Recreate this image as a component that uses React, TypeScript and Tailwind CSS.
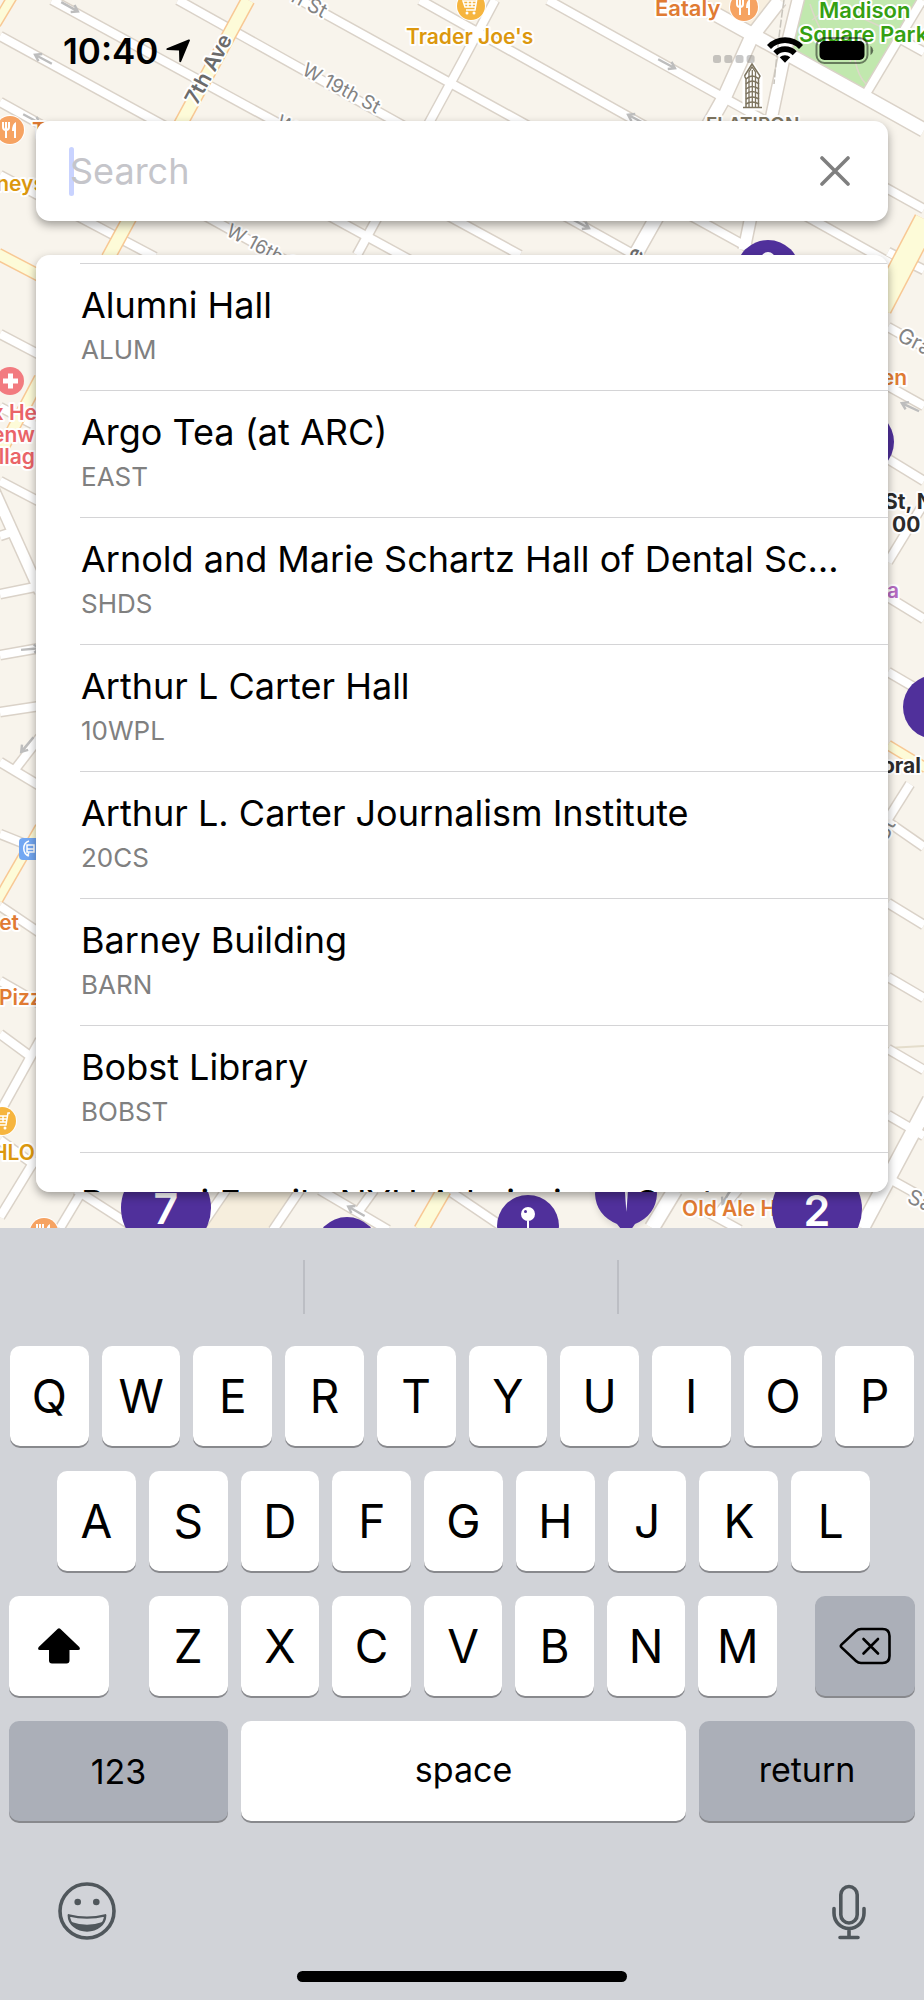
import { useState } from "react"

type TPlace = { name: string; code?: string }
type TRoad = { d: string; w?: number }

const places: TPlace[] = [
  { name: "Alumni Hall", code: "ALUM" },
  { name: "Argo Tea (at ARC)", code: "EAST" },
  { name: "Arnold and Marie Schartz Hall of Dental Sciences", code: "SHDS" },
  { name: "Arthur L Carter Hall", code: "10WPL" },
  { name: "Arthur L. Carter Journalism Institute", code: "20CS" },
  { name: "Barney Building", code: "BARN" },
  { name: "Bobst Library", code: "BOBST" },
  { name: "Bonomi Family NYU Admissions Center" },
]

export default function App() {
  const [query, setQuery] = useState("")

  return (
    <main className="relative flex h-screen flex-col overflow-hidden bg-[#f8f4ec] font-['Inter',sans-serif] text-black">
      <CityMap />
      <StatusBar />
      <form
        className="relative mx-9 flex h-[100px] flex-none items-center rounded-[14px] bg-white pr-[38px] pl-[34px] shadow-[0_4px_10px_rgba(0,0,0,0.36)]"
        onSubmit={e => e.preventDefault()}
      >
        <span className="absolute left-[33px] h-[49px] w-[5px] rounded-full bg-[#c9d3ff]" />
        <input
          aria-label="Search"
          className="relative h-full min-w-0 flex-1 bg-transparent text-[36px] outline-none placeholder:text-[#c5c5ca]"
          placeholder="Search"
          value={query}
          onChange={e => setQuery(e.target.value)}
        />
        <button type="button" aria-label="Clear" onClick={() => setQuery("")}>
          <svg className="size-[30px]" viewBox="0 0 30 30" stroke="#7f7f7f" strokeWidth="3.6" strokeLinecap="round">
            <path d="M2 2L28 28M28 2L2 28" />
          </svg>
        </button>
      </form>
      <ul className="relative mx-9 mt-[34px] mb-9 min-h-0 flex-1 overflow-y-auto rounded-[14px] bg-white pt-2 shadow-[0_4px_10px_rgba(0,0,0,0.36)] [scrollbar-width:none]">
        {places.map(p => <PlaceRow place={p} key={p.name} />)}
      </ul>
      <Keyboard />
    </main>
  )
}

function PlaceRow({ place }: { place: TPlace }) {
  return (
    <li className="ml-11 h-[127px] border-t border-[#d4d4d6] pr-12 pl-px">
      <button type="button" className={"block w-full text-left " + (place.code ? "pt-[19px]" : "pt-7")}>
        <div className="truncate text-[36px] leading-[44px]">{place.name}</div>
        {place.code && <div className="mt-[7px] text-[26px] leading-8 text-[#808080]">{place.code}</div>}
      </button>
    </li>
  )
}

function StatusBar() {
  return (
    <header className="relative flex h-[121px] flex-none items-start justify-between pt-[30px] pr-[50px] pl-[63px]">
      <div className="flex items-center gap-2">
        <span className="text-[35px] leading-[42px] font-semibold">10:40</span>
        <svg className="size-6" viewBox="0 0 24 24">
          <path d="M22.6 .6C23.7 .1 24.3 .8 23.8 1.8L15.2 22.6C14.7 23.6 13.4 23.5 13.3 22.3L13 11.4L1.4 11C.1 10.9 -.1 9.8 1 9.2Z" />
        </svg>
      </div>
      <div className="flex h-10 items-center">
        <svg className="h-10 w-[42px]" viewBox="0 0 42 40" fill="#77777766">
          <rect x="0" y="25" width="8" height="8" rx="2.500" />
          <rect x="11.300" y="25" width="8" height="8" rx="2.500" />
          <rect x="22.500" y="25" width="8" height="8" rx="2.500" />
          <rect x="33.600" y="25" width="8" height="8" rx="2.500" />
        </svg>
        <svg className="ml-3 h-[26px] w-9" viewBox="0 0 36 26">
          <path d="M0 8A25 25 0 0 1 36 8L32 12A19.500 19.500 0 0 0 4 12ZM6.300 14.200A16.500 16.500 0 0 1 29.700 14.200L25.700 18.200A11 11 0 0 0 10.300 18.200ZM12.700 20.200A8 8 0 0 1 23.300 20.200L18 25.800Z" />
        </svg>
        <svg className="ml-3 h-[27px] w-[59px]" viewBox="0 0 59 27">
          <rect x="1.500" y="1" width="51" height="25" rx="8" fill="none" stroke="#0007" strokeWidth="2" />
          <rect x="4.500" y="4" width="45" height="19" rx="5" />
          <path d="M55.500 8.800Q61 13.500 55.500 18.200Z" fill="#0008" />
        </svg>
      </div>
    </header>
  )
}

/* ---------- keyboard ---------- */

const keyBase = "flex h-[100px] items-center justify-center rounded-[10px] shadow-[0_2px_0_#88898d]"
const darkKey = "bg-[#abafb8]"

function LetterKeys({ letters, className }: { letters: string; className: string }) {
  return (
    <div className={"flex gap-[13px] " + className}>
      {letters.split("").map(l => (
        <button type="button" key={l} className={keyBase + " min-w-0 flex-1 bg-white text-[46px] leading-none"}>
          {l}
        </button>
      ))}
    </div>
  )
}

function Keyboard() {
  return (
    <section aria-label="Keyboard" className="relative flex-none bg-[#d1d3d8] pb-[18px]">
      {/* suggestion bar */}
      <div className="mx-[-8px] grid h-[118px] grid-cols-3 divide-x-2 divide-[#bcbec4] py-8">
        <div /><div /><div />
      </div>
      <div className="flex flex-col gap-[25px]">
        <LetterKeys letters="QWERTYUIOP" className="px-[10px]" />
        <LetterKeys letters="ASDFGHJKL" className="pr-[54px] pl-[57px]" />
        <div className="flex px-[9px]">
          <button type="button" aria-label="Shift" className={keyBase + " w-[100px] bg-white"}>
            <svg className="h-9 w-[42px]" viewBox="0 0 42 36">
              <path d="M19.800 .8Q21 -.2 22.200 .8L41.300 19Q43 21.800 40 22H31.500V32.500Q31.500 35.500 28.500 35.500H14Q11 35.500 11 32.500V22H2Q-1 21.800 .7 19Z" />
            </svg>
          </button>
          <LetterKeys letters="ZXCVBNM" className="mr-[38px] ml-10 flex-1" />
          <button type="button" aria-label="Delete" className={keyBase + " w-[100px] " + darkKey}>
            <svg className="h-[38px] w-[52px]" viewBox="0 0 52 38" fill="none" stroke="#000" strokeWidth="2.600" strokeLinecap="round" strokeLinejoin="round">
              <path d="M2.500 17.600L17 4Q19.200 2 22 2H43.500Q50.500 2 50.500 9V29Q50.500 36 43.500 36H22Q19.200 36 17 34L2.500 20.400Q1 19 2.500 17.600Z" />
              <path d="M24.500 12L39 26.500M39 12L24.500 26.500" />
            </svg>
          </button>
        </div>
        <div className="flex gap-[13px] px-[9px] text-[34px]">
          <button type="button" className={keyBase + " w-[219px] " + darkKey}>123</button>
          <button type="button" className={keyBase + " flex-1 bg-white pb-1"}>space</button>
          <button type="button" className={keyBase + " w-[216px] pb-1 " + darkKey}>return</button>
        </div>
      </div>
      <div className="mt-[61px] flex items-center justify-between px-[58px]">
        <button type="button" aria-label="Emoji">
          <svg className="size-[58px]" viewBox="0 0 58 58" fill="none" stroke="#50575c" strokeWidth="3.600">
            <circle cx="29" cy="29" r="27" />
            <circle cx="19.700" cy="20" r="3.300" fill="#50575c" stroke="none" />
            <circle cx="38.300" cy="20" r="3.300" fill="#50575c" stroke="none" />
            <path d="M10.800 33.300Q29 38 47.200 33.300C47.200 42 39 48.500 29 48.500S10.800 42 10.800 33.300Z" strokeWidth="2.400" strokeLinejoin="round" />
            <path d="M13.500 40Q29 45.500 44.500 40C41 46 35.500 49 29 49S17 46 13.500 40Z" fill="#50575c" stroke="none" />
          </svg>
        </button>
        <button type="button" aria-label="Dictate">
          <svg className="h-[58px] w-[34px]" viewBox="0 0 34 58" fill="none" stroke="#50575c" strokeWidth="3.600" strokeLinecap="round">
            <rect x="8.800" y="4.500" width="16.400" height="36.500" rx="8.200" />
            <path d="M2 26.500V31A15 15.500 0 0 0 32 31V26.500M17 46.500V55M8 55.500H26" />
          </svg>
        </button>
      </div>
      <div className="mx-auto mt-[31px] h-[11px] w-[330px] rounded-full bg-black" />
    </section>
  )
}

/* ---------- map ---------- */

const streets: TRoad[] = [
  // cross streets
  { d: "M0 102L285 260" },
  { d: "M0 175L155 257" },
  { d: "M0 36L410 260" },
  { d: "M52 0L520 255" },
  { d: "M178 0L640 258" },
  { d: "M300 0L760 254" },
  { d: "M420 0L899 268" },
  { d: "M548 0L924 209" },
  { d: "M690 0L755 36L865 97L924 130", w: 13 },
  { d: "M895 36L924 52" },
  // avenues
  { d: "M495 0L462 62L430 121L357 255" },
  { d: "M780 0L752 36L725 96L637 252", w: 13 },
  { d: "M799 -4L785 53L772 115L744 250", w: 11 },
  { d: "M922 0L867 92" },
  // left edge
  { d: "M0 334L40 355" },
  { d: "M0 407L40 428" },
  { d: "M0 481L40 502" },
  { d: "M-6 490L40 592", w: 10 },
  { d: "M0 536L12 532" },
  { d: "M0 594L40 586" },
  { d: "M0 655L40 648" },
  { d: "M0 712L40 706" },
  { d: "M0 762L40 786" },
  { d: "M13 772L40 737" },
  { d: "M0 834L40 850" },
  { d: "M0 906L40 933" },
  { d: "M0 981L40 1004" },
  { d: "M0 1034L30 1056" },
  { d: "M40 1040L0 1112" },
  { d: "M0 1140L36 1166" },
  { d: "M36 1158L0 1217" },
  // right edge
  { d: "M888 252L924 270" },
  { d: "M888 327L924 347" },
  { d: "M888 386L924 406" },
  { d: "M888 459L924 481" },
  { d: "M924 503L888 562" },
  { d: "M888 597L924 619" },
  { d: "M888 672L924 693" },
  { d: "M910 784L888 819" },
  { d: "M888 822L924 847" },
  { d: "M888 903L924 925" },
  { d: "M888 977L924 998" },
  { d: "M888 1049L924 1070" },
  { d: "M888 1115L924 1136" },
  { d: "M888 1178L924 1198" },
  { d: "M930 1100L862 1228", w: 14 },
  // above the keyboard
  { d: "M84 1188L60 1228" },
  { d: "M76 1190L135 1228" },
  { d: "M226 1190L200 1228" },
  { d: "M300 1190L273 1230" },
  { d: "M320 1190L388 1230" },
  { d: "M374 1190L356 1215" },
  { d: "M445 1188L510 1232" },
  { d: "M675 1190L652 1228", w: 14 },
  { d: "M700 1208L740 1230" },
  { d: "M738 1190L716 1216" },
]

const avenues: TRoad[] = [
  { d: "M14 -6L-4 24" },
  { d: "M248 0L108 258", w: 12 },
  { d: "M-2 254L42 277", w: 10 },
  { d: "M40 378L2 450", w: 10 },
  { d: "M926 220L880 308", w: 22 },
  { d: "M40 827L-2 900" },
  { d: "M888 745L926 768" },
  { d: "M444 1190L421 1230", w: 13 },
]

function Roads({ roads, fill, edge }: { roads: TRoad[]; fill: string; edge: string }) {
  return (
    <g fill="none">
      {roads.map(r => <path key={r.d} d={r.d} stroke={edge} strokeWidth={(r.w ?? 8) + 3} />)}
      {roads.map(r => <path key={r.d} d={r.d} stroke={fill} strokeWidth={r.w ?? 8} />)}
    </g>
  )
}

// one-way arrow
function Arrow({ x, y, r }: { x: number; y: number; r: number }) {
  return <path d="M-10 0H8M3 -4L9 0L3 4" transform={`translate(${x} ${y}) rotate(${r})`} fill="none" stroke="#bdbdbd" strokeWidth="2.400" />
}

function Label(props: { x: number; y: number; fill: string; size?: number; r?: number; weight?: number; end?: boolean; children: string }) {
  const { x, y, fill, size = 21, r = 0, weight = 600, end, children } = props
  return (
    <text
      transform={`translate(${x} ${y}) rotate(${r})`}
      fill={fill}
      fontSize={size}
      fontWeight={weight}
      textAnchor={end ? "end" : "start"}
      className="stroke-white stroke-[4px] [paint-order:stroke] [stroke-linejoin:round]"
    >
      {children}
    </text>
  )
}

function Food({ x, y }: { x: number; y: number }) {
  return (
    <g transform={`translate(${x} ${y})`}>
      <circle r="15" fill="#fff" />
      <circle r="14" fill="#f6a362" />
      <path d="M-4 -8V8M-7 -8V-3Q-7 0 -4 0Q-1 0 -1 -3V-8" fill="none" stroke="#fff" strokeWidth="2" />
      <path d="M6 -8V8H4V1H2Q2 -6 6 -8Z" fill="#fff" />
    </g>
  )
}

function Cart({ x, y }: { x: number; y: number }) {
  return (
    <g transform={`translate(${x} ${y})`}>
      <circle r="15" fill="#fff" />
      <circle r="14" fill="#f6b53f" />
      <path d="M8 -8H6L4 4H-5M6 -5H-8L-6 1H4M-3 -5V1M1 -5V1M-7 -2H5" fill="none" stroke="#fff" strokeWidth="1.500" />
      <circle cx="-4" cy="7" r="1.500" fill="#fff" />
      <circle cx="3" cy="7" r="1.500" fill="#fff" />
    </g>
  )
}

function Flatiron() {
  return (
    <g fill="none" stroke="#7d745f">
      <path d="M745 108V77L752 64L760 77V108Z" fill="#fff" stroke="#fff" strokeWidth="5" />
      <path d="M743 107.500H762M744.500 76L752 64L760 76L758.500 79V107M744.500 76L746 79V107" strokeWidth="1.500" />
      <path d="M749 107V72L752 67L755.500 72V107M752.300 70V107" strokeWidth="1.300" />
      <path d="M746 79Q752 73 759 79M746 84Q752 78 759 84M746 89Q752 84 759 89M746 94Q752 89 759 94M746 99Q752 95 759 99M746 104Q752 100 759 104" strokeWidth="1.600" />
    </g>
  )
}

const purple = "#50309b"
const gold = "#dc980e"
const orange = "#e07b33"
const pink = "#ea6468"
const gray = "#838383"

function CityMap() {
  return (
    <svg className="absolute inset-0 h-full w-full" viewBox="0 0 924 2000" preserveAspectRatio="xMidYMin slice" aria-hidden="true">
      <path d="M224 1190H302L276 1230H200Z" fill="#f6eedd" />
      <path d="M690 0H780L752 36Z" fill="#f8efdf" />
      <path d="M805 -2H924L865 90L792 50Z" fill="#c1e8ae" />
      <path d="M812 20L840 0M825 38Q815 20 810 4M850 62Q856 40 870 30M855 60Q858 76 866 84M836 6L888 30M870 4Q880 20 905 12" fill="none" stroke="#dcd8c8" strokeWidth="1.500" />
      <path d="M888 1048L924 1046" stroke="#e4ddcb" strokeWidth="2" />
      <Roads roads={streets} fill="#fff" edge="#dad2c8" />
      <Roads roads={avenues} fill="#fdfbd8" edge="#f8c894" />
      <path d="M784 0Q778 40 774 84" fill="none" stroke="#c8c4bc" strokeWidth="1.500" strokeDasharray="8 2" />

      <Arrow x={70} y={7} r={29} />
      <Arrow x={43} y={59} r={208} />
      <Arrow x={32} y={119} r={28} />
      <Arrow x={667} y={64} r={28} />
      <Arrow x={636} y={119} r={208} />
      <Arrow x={581} y={224} r={28} />
      <Arrow x={910} y={407} r={205} />
      <Arrow x={31} y={649} r={355} />
      <Arrow x={27} y={745} r={130} />
      <Arrow x={356} y={1211} r={210} />
      <Arrow x={727} y={1196} r={120} />

      <Label x={290} y={1} r={28} fill={gray} weight={400} size={20}>h St</Label>
      <Label x={301} y={74} r={28} fill={gray} weight={400} size={19}>W 19th St</Label>
      <Label x={275} y={126} r={28} fill={gray} weight={400} size={19}>W 18th St</Label>
      <Label x={225} y={235} r={28} fill={gray} weight={400} size={19}>W 16th St</Label>
      <Label x={197} y={106} r={-62} fill="#6b6b6b">7th Ave</Label>
      <Label x={644} y={252} r={-62} fill="#6b6b6b" end>5th Ave</Label>
      <Label x={896} y={340} r={27} fill={gray} weight={400}>Gra</Label>
      <Label x={906} y={1202} r={24} fill={gray} weight={400}>Sa</Label>
      <Label x={896} y={824} r={-62} fill={gray} weight={400} end>St</Label>

      <Cart x={471} y={6} />
      <Label x={406} y={44} fill={gold}>Trader Joe's</Label>
      <Label x={655} y={16} fill={orange} size={22}>Eataly</Label>
      <Food x={744} y={7} />
      <Label x={819} y={18} fill="#35a012" size={22}>Madison</Label>
      <Label x={799} y={42} fill="#35a012" size={22}>Square Park</Label>
      <Flatiron />
      <Label x={706} y={131} fill="#7d745f" size={19}>FLATIRON</Label>

      <Food x={10} y={130} />
      <Label x={32} y={138} fill={orange}>T</Label>
      <Label x={45} y={191} fill={gold} end>neys</Label>
      <circle cx="10" cy="381" r="14" fill="#f27b80" />
      <path d="M3 381H18M10.500 373.500V388.500" stroke="#fff" strokeWidth="5" />
      <Label x={37} y={420} fill={pink} end>x He</Label>
      <Label x={35} y={442} fill={pink} end>enw</Label>
      <Label x={35} y={464} fill={pink} end>llag</Label>
      <rect x="19" y="838" width="24" height="22" rx="4" fill="#73a7f2" />
      <path d="M29 841A8 8 0 0 0 29 856" stroke="#fff" strokeWidth="1.500" fill="none" />
      <path d="M27 845H34V852H27ZM27 849H34M27 856L29 853" stroke="#fff" strokeWidth="1.500" fill="none" />
      <Label x={19} y={930} fill={orange} end>et</Label>
      <Label x={-1} y={1005} fill={orange}>Pizz</Label>
      <Cart x={2} y={1121} />
      <Label x={35} y={1160} fill={gold} end>HLO</Label>
      <Food x={44} y={1232} />

      <Label x={907} y={385} fill={orange} end>en</Label>
      <circle cx="862" cy="442" r="32" fill={purple} />
      <Label x={884} y={509} fill="#2b2b2b" weight={700}>St, N</Label>
      <Label x={892} y={532} fill="#2b2b2b" weight={700}>00</Label>
      <Label x={899} y={598} fill="#b56bc2" end>a</Label>
      <circle cx="935" cy="707" r="32" fill={purple} />
      <Label x={921} y={773} fill="#2b2b2b" weight={700} end>oral</Label>

      <circle cx="768" cy="272" r="32" fill={purple} />
      <circle cx="768" cy="259" r="7" fill="#fff" />
      <circle cx="166" cy="1208" r="45" fill={purple} />
      <text x="166" y="1224" fill="#fff" fontSize="43" fontWeight="600" textAnchor="middle">7</text>
      <circle cx="347" cy="1249" r="32" fill={purple} />
      <circle cx="528" cy="1226" r="31" fill={purple} />
      <circle cx="528" cy="1214" r="7" fill="#fff" />
      <circle cx="525.500" cy="1211.500" r="1.500" fill={purple} />
      <path d="M528 1221V1240" stroke="#fff" strokeWidth="2" />
      <path d="M595 1194A31 31 0 0 1 657 1194Q656 1215 635 1224L628 1234H625L617 1224Q596 1215 595 1194Z" fill={purple} className="drop-shadow-md" />
      <path d="M624.800 1190H628L626.400 1212Z" fill="#fff" />
      <Label x={682} y={1216} fill={orange}>Old Ale Ho</Label>
      <circle cx="817" cy="1209" r="45" fill={purple} />
      <text x="817" y="1226" fill="#fff" fontSize="43" fontWeight="600" textAnchor="middle">2</text>
    </svg>
  )
}
